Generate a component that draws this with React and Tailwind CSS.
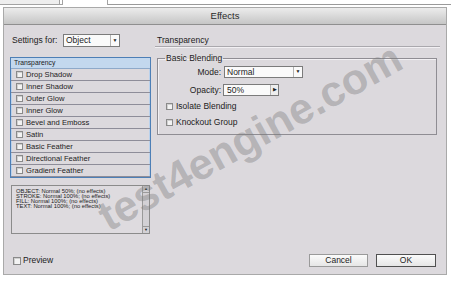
export default function App() {
  const items = [
    "Drop Shadow",
    "Inner Shadow",
    "Outer Glow",
    "Inner Glow",
    "Bevel and Emboss",
    "Satin",
    "Basic Feather",
    "Directional Feather",
    "Gradient Feather",
  ];
  const info = [
    "OBJECT: Normal 50%; (no effects)",
    "STROKE: Normal 100%; (no effects)",
    "FILL: Normal 100%; (no effects)",
    "TEXT: Normal 100%; (no effects)",
  ];
  const Check = () => (
    <span className="block w-[7px] h-[7px] border border-[#8a8a8a] bg-[#f3f3f3] shadow-[inset_1px_1px_0_#d0d0d0]" />
  );
  return (
    <div className="relative w-[451px] h-[282px] overflow-hidden bg-white text-[#1c1c1c] font-['Liberation_Sans',Arial,sans-serif]">
      {/* tabs strip */}
      <div className="flex h-[7px]">
        <div className="w-[60px] h-[5px] bg-[#eeeeee] border-r border-b border-[#a3a3a3]" />
        <div className="w-[2px] h-[5px] border-b border-[#a3a3a3]" />
        <div className="w-[46px] h-[5px] border-l border-r border-[#a3a3a3] bg-white" />
        <div className="flex-1 h-[5px] border-b border-[#9a9a9a]" />
      </div>

      {/* dialog */}
      <div className="ml-[3px] w-[444px] h-[268px] flex flex-col bg-[#dcd9dd] border border-[#a9a9a9]">
        <div className="h-[17px] shrink-0 flex items-center justify-center bg-gradient-to-b from-[#ececec] to-[#c6c6c6] border-b border-[#8f8f8f] text-[9.5px] text-[#2a2a2a]">
          Effects
        </div>

        <div className="flex h-[209px] shrink-0">
          {/* left column */}
          <div className="w-[147px] shrink-0 pl-[6px] pt-[9px] flex flex-col">
            <div className="flex items-center h-[13px] ml-[2px]">
              <span className="w-[51px] text-[8.5px]">Settings for:</span>
              <div className="flex h-[13px] w-[57px] border border-[#7b7b7b] bg-[#fafafa]">
                <span className="flex-1 pl-[2px] leading-[11px] text-[8.5px]">Object</span>
                <span className="w-[9px] border-l border-[#b4b4b4] flex items-center justify-center text-[5px]">▼</span>
              </div>
            </div>

            <div className="mt-[10px] w-[141px] h-[121px] border border-[#4d7fb6] shadow-[inset_0_0_0_1px_#b9d1ec] flex flex-col">
              <div className="h-[11px] shrink-0 bg-[#c3d8ee] border-b border-[#8ea9c9] pl-[3px] text-[6.8px] leading-[10px]">
                Transparency
              </div>
              {items.map((t) => (
                <div key={t} className="h-[12px] shrink-0 flex items-center pl-[5px] border-b border-[#8e8d99] text-[7.6px]">
                  <Check />
                  <span className="ml-[3px]">{t}</span>
                </div>
              ))}
            </div>

            <div className="mt-[7px] ml-[1px] w-[139px] h-[49px] flex border border-[#8b8b8b] bg-[#dedbdf]">
              <div className="flex-1 pl-[4px] pt-[3px] text-[5.8px] leading-[5px] whitespace-nowrap">
                {info.map((l) => (
                  <div key={l}>{l}</div>
                ))}
              </div>
              <div className="w-[7px] flex flex-col justify-between border-l border-[#9a9a9a] bg-[#d3d1d5]">
                <div className="h-[7px] border-b border-[#9a9a9a] flex items-center justify-center text-[4px]">▲</div>
                <div className="h-[7px] border-t border-[#9a9a9a] flex items-center justify-center text-[4px]">▼</div>
              </div>
            </div>
          </div>

          {/* right column */}
          <div className="flex-1 pt-[9px] pl-[4px] pr-[6px] flex flex-col">
            <div className="h-[13px] border-b border-[#aaa8ad] shadow-[0_1px_0_#f2f0f3] pl-[2px] text-[8.5px] leading-[12px]">
              Transparency
            </div>
            <fieldset className="mt-[6px] ml-[2px] mr-[3px] border border-[#8f8d93] shadow-[inset_1px_1px_0_#f2f0f3] flex flex-col pb-[6px]">
              <legend className="ml-[7px] px-[1px] text-[8.5px] leading-[10px]">Basic Blending</legend>
              <div className="mt-[3px] flex items-center h-[12px]">
                <span className="w-[63px] text-right text-[8.5px]">Mode:</span>
                <div className="ml-[3px] flex h-[12px] w-[79px] border border-[#7b7b7b] bg-[#fafafa]">
                  <span className="flex-1 pl-[2px] leading-[10px] text-[8.5px]">Normal</span>
                  <span className="w-[9px] border-l border-[#b4b4b4] flex items-center justify-center text-[5px]">▼</span>
                </div>
              </div>
              <div className="mt-[6px] flex items-center h-[12px]">
                <span className="w-[63px] text-right text-[8.5px]">Opacity:</span>
                <div className="ml-[2px] flex h-[12px] w-[56px] border border-[#7b7b7b] bg-[#fafafa]">
                  <span className="flex-1 pl-[3px] leading-[10px] text-[8.5px]">50%</span>
                  <span className="w-[8px] border-l border-[#b4b4b4] bg-[#eeeeee] flex items-center justify-center text-[5px]">▶</span>
                </div>
              </div>
              <div className="mt-[5px] h-[11px] flex items-center pl-[8px]">
                <Check />
                <span className="ml-[3px] text-[8.5px]">Isolate Blending</span>
              </div>
              <div className="mt-[5px] h-[11px] flex items-center pl-[8px]">
                <Check />
                <span className="ml-[3px] text-[8.5px]">Knockout Group</span>
              </div>
            </fieldset>
          </div>
        </div>

        {/* footer */}
        <div className="mt-[20px] h-[13px] flex items-center pl-[9px] pr-[10px]">
          <span className="block w-[8px] h-[8px] border border-[#8a8a8a] bg-[#f3f3f3] shadow-[inset_1px_1px_0_#d0d0d0]" />
          <span className="ml-[2px] text-[8.5px]">Preview</span>
          <div className="ml-auto flex">
            <div className="w-[59px] h-[13px] border border-[#9a9a9a] bg-gradient-to-b from-[#fbfbfb] to-[#e6e6e6] flex items-center justify-center text-[8.5px]">
              Cancel
            </div>
            <div className="ml-[8px] w-[60px] h-[13px] border border-[#505050] bg-gradient-to-b from-[#fbfbfb] to-[#e6e6e6] flex items-center justify-center text-[8.5px]">
              OK
            </div>
          </div>
        </div>
      </div>

      {/* watermark */}
      <div className="pointer-events-none absolute left-[250px] top-[137px] -translate-x-1/2 -translate-y-1/2 -rotate-[29deg] whitespace-nowrap text-[43px] font-bold leading-none text-[rgba(120,120,120,0.4)]">
        test4engine.com
      </div>
    </div>
  );
}
